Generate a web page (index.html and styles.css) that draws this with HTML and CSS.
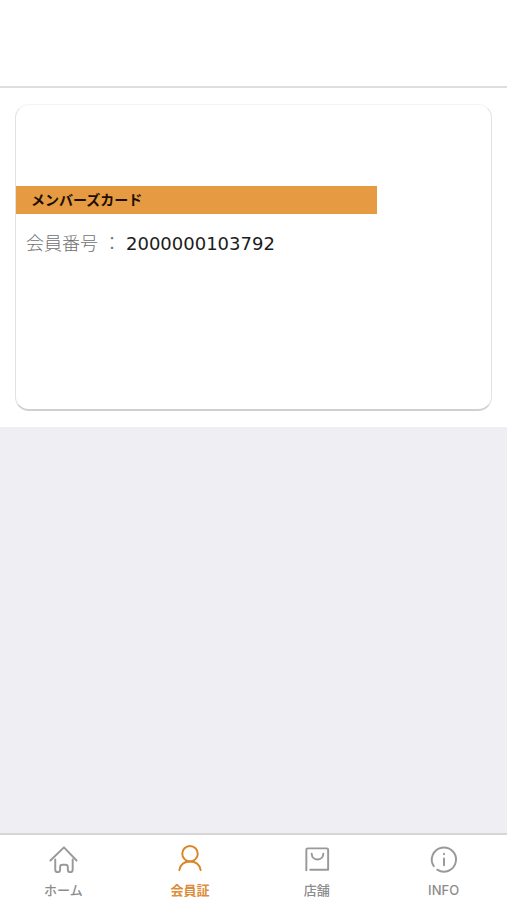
FILE: index.html
```
<!DOCTYPE html>
<html lang="ja">
<head>
  <meta charset="UTF-8" />
  <meta name="viewport" content="width=device-width, initial-scale=1" />
  <title>メンバーズカード</title>
  <link rel="stylesheet" href="styles.css">
</head>
<body>
  <header class="top-bar"></header>

  <main>
    <section class="card-area">
      <div class="member-card">
        <h1 class="card-title">メンバーズカード</h1>
        <p class="member-no">
          <span class="label">会員番号</span>
          <span class="colon">：</span>
          <span class="number">2000000103792</span>
        </p>
      </div>
    </section>
  </main>

  <nav class="tab-bar">
    <a href="#home" class="tab">
      <svg viewBox="0 0 32 32" aria-hidden="true">
        <path d="M3 17 L17 3.500 L30 17 M8 16 V26.500 Q8 29 10.500 29 Q13 29 13 26.500 V24 Q13 21.500 15.500 21.500 H18.500 Q21 21.500 21 24 V26.500 Q21 29 23.500 29 Q26 29 26 26.500 V16" />
      </svg>
      <span>ホーム</span>
    </a>
    <a href="#card" class="tab active" aria-current="page">
      <svg viewBox="0 0 32 32" aria-hidden="true">
        <circle cx="16" cy="10" r="8" />
        <path d="M5 27 C6 21 10.500 18 16 18 S26 21 27 27" />
      </svg>
      <span>会員証</span>
    </a>
    <a href="#shop" class="tab">
      <svg viewBox="0 0 32 32" aria-hidden="true">
        <path d="M5 27 V6 Q5 4.500 6.500 4.500 H26 Q27.500 4.500 27.500 6 V26.500 H9 M10.500 10 C11 18 22 18 22.500 10" />
      </svg>
      <span>店舗</span>
    </a>
    <a href="#info" class="tab">
      <svg viewBox="0 0 32 32" aria-hidden="true">
        <path d="M5.500 23 A12.500 12.500 0 1 1 9 26.500 M16 15 V22 M16 10 V10.500" />
      </svg>
      <span>INFO</span>
    </a>
  </nav>
</body>
</html>
```

FILE: styles.css
```
* {
  box-sizing: border-box;
}

body {
  font-family: Inter, "Noto Sans CJK JP", sans-serif;
  display: flex;
  flex-direction: column;
  margin: 0;
  min-height: 100vh;
  background: #eeeef3;
}

.top-bar {
  height: 88px;
  background: white;
  border-bottom: 2px solid #dedede;
}

main {
  flex: 1;
}

.card-area {
  padding: 16px 15px;
  background: white;
}

.member-card {
  min-height: 307px;
  padding-top: 81px;
  background: white;
  border: 1px solid #e2e2e2;
  border-top-color: #f4f4f4;
  border-bottom: 2px solid #d0d0d0;
  border-radius: 14px;
}

.card-title {
  width: 76%;
  margin: 0;
  padding: 0 15px;
  background: #e69b42;
  color: #1c0e04;
  font-size: 14px;
  font-weight: 700;
  line-height: 28px;
}

.member-no {
  display: flex;
  align-items: center;
  margin: 0;
  padding: 16px 10px;
  line-height: 28px;
}

.label,
.colon {
  color: #707070;
  font-size: 18px;
  font-weight: 300;
}

.colon {
  margin: 0 5px;
}

.number {
  color: #1c1c1c;
  font-family: "DejaVu Sans", sans-serif;
  font-size: 18px;
}

.tab-bar {
  display: flex;
  height: 67px;
  padding-top: 9px;
  background: white;
  border-top: 2px solid #d6d6d9;
}

.tab {
  flex: 1;
  display: flex;
  flex-direction: column;
  align-items: center;
  color: #8c8c8c;
  font-size: 13px;
  font-weight: 500;
  line-height: 20px;
  text-decoration: none;
}

.tab svg {
  width: 32px;
  height: 32px;
  margin-bottom: 5px;
  fill: none;
  stroke: #999;
  stroke-width: 2;
  stroke-linecap: round;
  stroke-linejoin: round;
}

.active {
  color: #db8d3a;
  font-weight: 700;
}

.active svg {
  stroke: #d98528;
}
```
